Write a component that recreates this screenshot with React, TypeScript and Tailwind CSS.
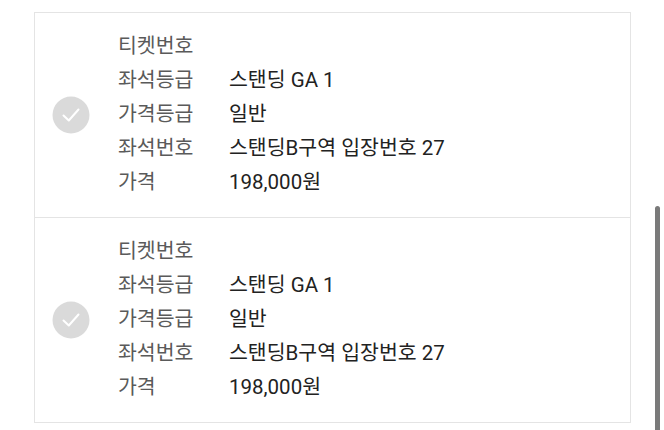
import React from 'react';

type Ticket = {
    grade: string;
    priceGrade: string;
    seat: string;
    price: string;
};

const tickets: Ticket[] = [
    { grade: '스탠딩 GA 1', priceGrade: '일반', seat: '스탠딩B구역 입장번호 27', price: '198,000원' },
    { grade: '스탠딩 GA 1', priceGrade: '일반', seat: '스탠딩B구역 입장번호 27', price: '198,000원' },
];

const CheckCircle = () => (
    <svg width="38" height="38" viewBox="0 0 38 38">
        <circle cx="19" cy="19" r="18.5" fill="#dadada" />
        <path d="M11.5 19.5 L16.8 24.5 L26.5 13.5" fill="none" stroke="#ffffff" strokeWidth="2" strokeLinecap="round" strokeLinejoin="round" />
    </svg>
);

const Row = ({ label, value }: { label: string; value?: string }) => (
    <div className="flex h-[34px] items-center">
        <span className="w-[111px] text-[#5a5a5a]">{label}</span>
        <span className="text-[#222]">{value}</span>
    </div>
);

export default function App() {
    return (
        <div
            className="relative h-[430px] w-[664px] overflow-hidden bg-white"
            style={{ fontFamily: 'Roboto, "Noto Sans CJK KR", "Noto Sans", sans-serif' }}
        >
            <div className="ml-[34px] mt-[12px] w-[597px] border border-[#e4e4e4] text-[20.5px] leading-none">
                {tickets.map((t, i) => (
                    <div
                        key={i}
                        className={`flex items-center pl-[17px] ${i === 0 ? 'h-[205px] border-b border-[#e4e4e4]' : 'h-[204px]'}`}
                    >
                        <CheckCircle />
                        <div className="ml-[28px] mt-[-2px] flex flex-col">
                            <Row label="티켓번호" />
                            <Row label="좌석등급" value={t.grade} />
                            <Row label="가격등급" value={t.priceGrade} />
                            <Row label="좌석번호" value={t.seat} />
                            <Row label="가격" value={t.price} />
                        </div>
                    </div>
                ))}
            </div>
            {/* scrollbar */}
            <div className="absolute left-[655px] top-[206px] h-[230px] w-[5px] rounded-full bg-[#7a7a7a]" />
        </div>
    );
}
